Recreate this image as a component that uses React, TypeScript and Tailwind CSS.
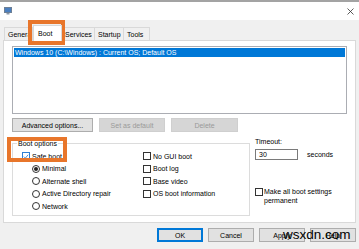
function Check({ checked = false }: { checked?: boolean }) {
  return (
    <span
      className={`inline-flex w-[8px] h-[8px] shrink-0 items-center justify-center bg-white border ${
        checked ? "border-[#2f7fd4]" : "border-[#333333]"
      }`}
    >
      {checked && (
        <svg width="7" height="7" viewBox="0 0 7 7">
          <path d="M1 3.6 L2.8 5.4 L6 1.4" fill="none" stroke="#2f7fd4" strokeWidth="1" />
        </svg>
      )}
    </span>
  );
}

function Radio({ on = false }: { on?: boolean }) {
  return (
    <span className="inline-flex w-[8px] h-[8px] shrink-0 items-center justify-center rounded-full bg-white border border-[#333333]">
      {on && <span className="w-[4px] h-[4px] rounded-full bg-[#222222]" />}
    </span>
  );
}

function Btn({ label, w, disabled = false, main = false }: { label: string; w: string; disabled?: boolean; main?: boolean }) {
  return (
    <div
      className={`${w} h-[14px] flex items-center justify-center border ${
        disabled
          ? "bg-[#d6d6d6] border-[#cfcfcf] text-[#9a9a9a]"
          : main
          ? "bg-[#e1e1e1] border-[#0078d7] shadow-[inset_0_0_0_1px_#0078d7]"
          : "bg-[#e1e1e1] border-[#adadad]"
      }`}
    >
      {label}
    </div>
  );
}

const tabs = [
  { name: "General", w: "w-[29px]" },
  { name: "Boot", w: "w-[29px]", active: true },
  { name: "Services", w: "w-[33px]" },
  { name: "Startup", w: "w-[29px]" },
  { name: "Tools", w: "w-[26px]" },
];

export default function App() {
  return (
    <div className="relative w-[359px] h-[249px] overflow-hidden bg-[#f0f0f0] text-[7px] leading-[9px] text-black [font-family:'Liberation_Sans',Arial,sans-serif]">
      {/* title bar */}
      <div className="h-[20px] bg-white border-t-2 border-[#a3a3a3] flex items-center justify-between pl-[4px] pr-[5px]">
        <svg width="8" height="8" viewBox="0 0 8 8">
          <rect x="0.5" y="0.5" width="7" height="5" fill="#4a7fc0" stroke="#6d7f95" />
          <rect x="2.5" y="6" width="3" height="1.5" fill="#8a98a8" />
        </svg>
        <svg width="7" height="7" viewBox="0 0 7 7">
          <path d="M0.5 0.5 L6.5 6.5 M6.5 0.5 L0.5 6.5" stroke="#333" strokeWidth="0.8" />
        </svg>
      </div>

      {/* tabs */}
      <div className="pt-[4px] pl-[4px] h-[20px] flex items-end">
        {tabs.map((t) =>
          t.active ? (
            <div key={t.name} className={`${t.w} h-[16px] -mb-px z-10 bg-white border border-b-0 border-[#d9d9d9] pl-[4px] pt-[3px]`}>
              {t.name}
            </div>
          ) : (
            <div key={t.name} className={`${t.w} h-[13px] bg-[#f0f0f0] border border-l-0 first:border-l border-b-0 border-[#d9d9d9] pl-[3px] pt-[2px] overflow-hidden whitespace-nowrap`}>
              {t.name}
            </div>
          )
        )}
      </div>

      {/* tab panel */}
      <div className="ml-[3px] w-[353px] h-[183px] bg-white border border-[#d9d9d9] px-[8px] pt-[5px]">
        <div className="h-[68px] border border-[#abadb3] pt-px px-px">
          <div className="h-[9px] bg-[#0078d7] text-white pl-[1px] whitespace-nowrap">
            Windows 10 (C:\Windows) : Current OS; Default OS
          </div>
        </div>

        <div className="mt-[4px] flex gap-[6px]">
          <Btn label="Advanced options..." w="w-[81px]" />
          <Btn label="Set as default" w="w-[66px]" disabled />
          <Btn label="Delete" w="w-[67px]" disabled />
        </div>

        <div className="mt-[5px] flex items-start">
          <div className="relative mt-[6px] w-[238px] h-[73px] border border-[#dcdcdc] flex pt-[6px] pl-[9px]">
            <span className="absolute -top-[5px] left-[4px] bg-white px-px">Boot options</span>
            <div className="w-[121px] flex flex-col">
              <div className="h-[12.5px] flex items-center gap-[2px]">
                <Check checked />
                <span>Safe boot</span>
              </div>
              {["Minimal", "Alternate shell", "Active Directory repair", "Network"].map((r, i) => (
                <div key={r} className="h-[12.5px] flex items-center gap-[2px] pl-[10px]">
                  <Radio on={i === 0} />
                  <span>{r}</span>
                </div>
              ))}
            </div>
            <div className="flex flex-col">
              {["No GUI boot", "Boot log", "Base video", "OS boot information"].map((c) => (
                <div key={c} className="h-[12.5px] flex items-center gap-[2px]">
                  <Check />
                  <span>{c}</span>
                </div>
              ))}
            </div>
          </div>

          <div className="ml-[5px] flex flex-col">
            <div className="h-[9px]">Timeout:</div>
            <div className="mt-[3px] flex items-center">
              <div className="w-[43px] h-[11px] border border-[#7a7a7a] bg-white pl-[3px] flex items-center">30</div>
              <span className="ml-[9px]">seconds</span>
            </div>
            <div className="mt-[27px] flex items-start gap-[1px]">
              <span className="mt-px"><Check /></span>
              <span>
                Make all boot settings
                <br />
                permanent
              </span>
            </div>
          </div>
        </div>
      </div>

      {/* dialog buttons */}
      <div className="mt-[5px] pr-[3px] flex justify-end gap-[5px]">
        <Btn label="OK" w="w-[46px]" main />
        <Btn label="Cancel" w="w-[46px]" />
        <Btn label="Apply" w="w-[46px]" />
        <Btn label="Help" w="w-[46px]" />
      </div>

      {/* highlight boxes */}
      <div className="absolute left-[28px] top-[20px] w-[37px] h-[25px] border-4 border-[#e8762b]" />
      <div className="absolute left-[7px] top-[137px] w-[60px] h-[25px] border-4 border-[#e8762b]" />

      {/* watermark */}
      <div className="absolute left-[283px] top-[227px] text-[13.5px] leading-[16px] text-black">wsxdn.com</div>
    </div>
  );
}
